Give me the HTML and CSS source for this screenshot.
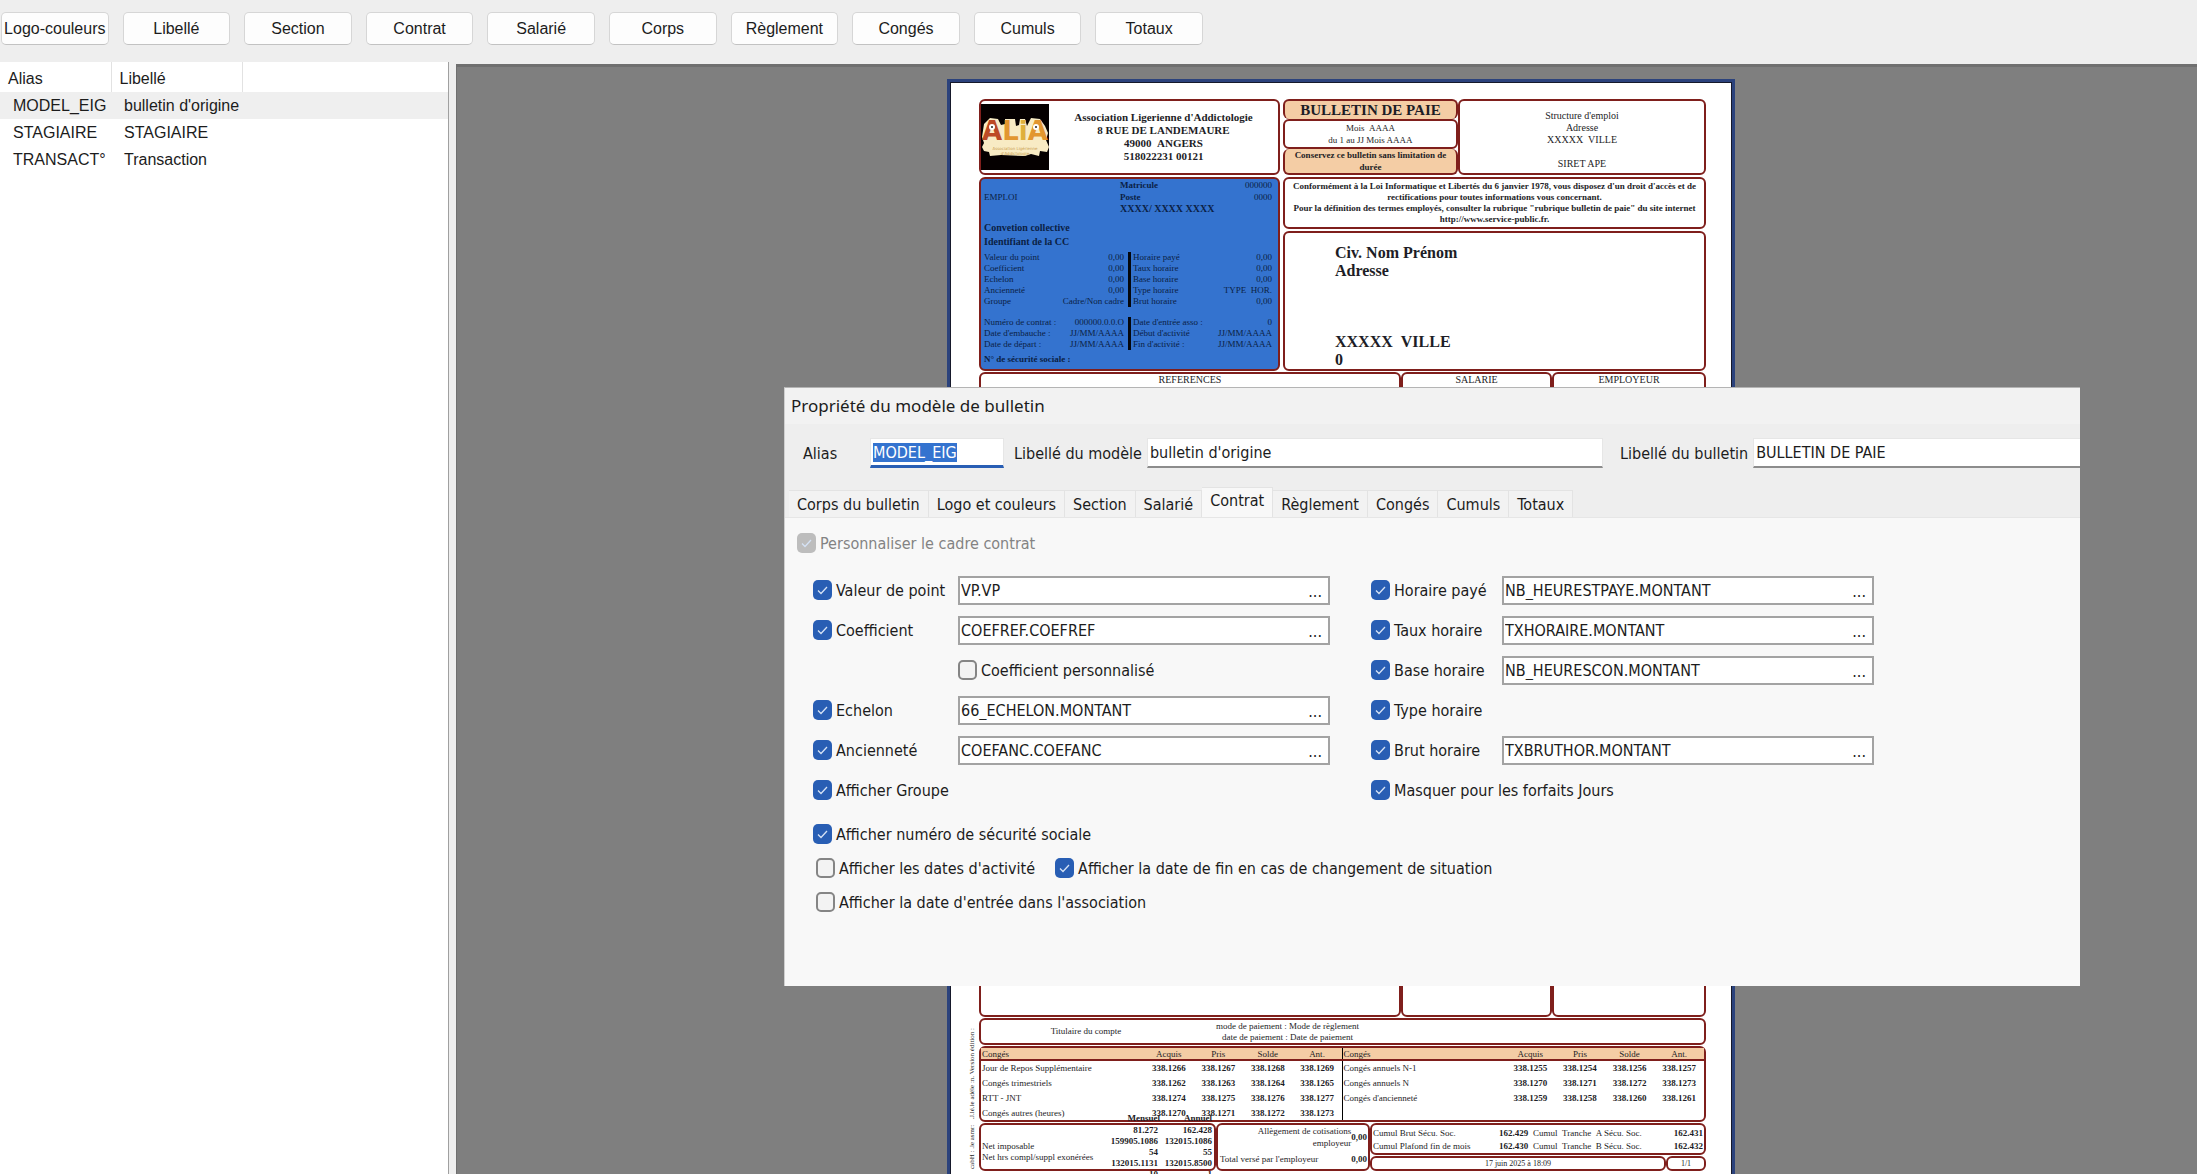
FILE: index.html
```
<!DOCTYPE html>
<html lang="fr">
<head>
  <meta charset="UTF-8" />
  <title>Modèles de bulletin</title>
  <link rel="stylesheet" href="styles.css">
</head>
<body>
  <nav class="toolbar">
    <button type="button">Logo-couleurs</button>
    <button type="button">Libellé</button>
    <button type="button">Section</button>
    <button type="button">Contrat</button>
    <button type="button">Salarié</button>
    <button type="button">Corps</button>
    <button type="button">Règlement</button>
    <button type="button">Congés</button>
    <button type="button">Cumuls</button>
    <button type="button">Totaux</button>
  </nav>

  <div class="workspace">
    <aside class="models">
      <table>
        <thead>
          <tr><th class="col-alias">Alias</th><th class="col-label">Libellé</th><th></th></tr>
        </thead>
        <tbody>
          <tr class="selected"><td>MODEL_EIG</td><td>bulletin d'origine</td><td></td></tr>
          <tr><td>STAGIAIRE</td><td>STAGIAIRE</td><td></td></tr>
          <tr><td>TRANSACT°</td><td>Transaction</td><td></td></tr>
        </tbody>
      </table>
    </aside>

    <main class="preview">
      <div class="paper">
        <div class="side-note">cabH : .le asmr: &nbsp; .J.lé.le adéle :n. Version édition :</div>

        <div class="slip">
          <div class="slip-top">
            <div class="left-col">
              <section class="box company">
                <svg class="logo" viewBox="0 0 68 66" role="img" aria-label="ALiA">
                  <rect width="68" height="66" fill="#050000" />
                  <path d="M1 33 L3 20 L5 18 L9 14 L17 15 L20 21 L24 20 L24 15 L34 15 L35 22 L38 21 L39 15 L44 15 L46 22 L50 14 L59 15 L64 22 L67 29 L65 36 L68 43 L66 48 L59 47 L58 52 L50 50 L44 52 L20 51 L9 52 L8 48 L3 47 L1 43 L3 39 Z" fill="#f8ebc4" />
                  <text x="1" y="36" font-size="26" class="logo-letters"><tspan fill="#bd4a25">A</tspan><tspan fill="#e2962f">L</tspan><tspan fill="#dfb03b">i</tspan><tspan fill="#e2962f">A</tspan></text>
                  <circle cx="11" cy="23" r="3" fill="#fff" />
                  <circle cx="11" cy="23" r="1" fill="#222" />
                  <circle cx="55" cy="23" r="3" fill="#fff" />
                  <circle cx="55" cy="23" r="1" fill="#222" />
                  <text x="34" y="46" font-size="4" class="logo-sub">Association Ligérienne</text>
                  <text x="34" y="51" font-size="4" class="logo-sub">d'Addictologie</text>
                </svg>
                <p>Association Ligerienne d'Addictologie<br>8 RUE DE LANDEMAURE<br>49000 &nbsp;ANGERS<br>518022231 00121</p>
              </section>

              <section class="box contract">
                <div class="contract-head">
                  <span class="job">EMPLOI</span>
                  <b>Matricule</b><span class="num">000000</span>
                  <b>Poste</b><span class="num">0000</span>
                  <b class="xref">XXXX/ XXXX XXXX</b>
                </div>
                <p class="agreement">Convetion collective<br>Identifiant de la CC</p>
                <div class="pairs">
                  <dl>
                    <dt>Valeur du point</dt><dd>0,00</dd>
                    <dt>Coefficient</dt><dd>0,00</dd>
                    <dt>Echelon</dt><dd>0,00</dd>
                    <dt>Ancienneté</dt><dd>0,00</dd>
                    <dt>Groupe</dt><dd>Cadre/Non cadre</dd>
                  </dl>
                  <dl>
                    <dt>Horaire payé</dt><dd>0,00</dd>
                    <dt>Taux horaire</dt><dd>0,00</dd>
                    <dt>Base horaire</dt><dd>0,00</dd>
                    <dt>Type horaire</dt><dd>TYPE &nbsp;HOR.</dd>
                    <dt>Brut horaire</dt><dd>0,00</dd>
                  </dl>
                </div>
                <div class="pairs">
                  <dl>
                    <dt>Numéro de contrat :</dt><dd>000000.0.0.O</dd>
                    <dt>Date d'embauche :</dt><dd>JJ/MM/AAAA</dd>
                    <dt>Date de départ :</dt><dd>JJ/MM/AAAA</dd>
                  </dl>
                  <dl>
                    <dt>Date d'entrée asso :</dt><dd>0</dd>
                    <dt>Début d'activité</dt><dd>JJ/MM/AAAA</dd>
                    <dt>Fin d'activité :</dt><dd>JJ/MM/AAAA</dd>
                  </dl>
                </div>
                <b class="secu">N° de sécurité sociale :</b>
              </section>
            </div>

            <div class="right-col">
              <div class="heads">
                <section class="title-stack">
                  <h1 class="box tinted">BULLETIN DE PAIE</h1>
                  <p class="box period">Mois &nbsp;AAAA<br>du 1 au JJ Mois AAAA</p>
                  <p class="box tinted keep">Conservez ce bulletin sans limitation de<br>durée</p>
                </section>
                <section class="box employer">
                  <p>Structure d'emploi<br>Adresse<br>XXXXX &nbsp;VILLE<br><br>SIRET APE</p>
                </section>
              </div>
              <p class="box legal">Conformément à la Loi Informatique et Libertés du 6 janvier 1978, vous disposez d'un droit d'accès et de<br>rectifications pour toutes informations vous concernant.<br>Pour la définition des termes employés, consulter la rubrique "rubrique bulletin de paie" du site internet<br>http://www.service-public.fr.</p>
              <section class="box address">
                <p>Civ. Nom Prénom<br>Adresse</p>
                <p>XXXXX &nbsp;VILLE<br>0</p>
              </section>
            </div>
          </div>

          <div class="body-cols">
            <div class="box">REFERENCES</div>
            <div class="box">SALARIE</div>
            <div class="box">EMPLOYEUR</div>
          </div>

          <div class="box payment">
            <span>Titulaire du compte</span>
            <p>mode de paiement : Mode de règlement<br>date de paiement : Date de paiement</p>
          </div>

          <div class="box leave">
            <table>
              <thead>
                <tr><th>Congés</th><th>Acquis</th><th>Pris</th><th>Solde</th><th>Ant.</th></tr>
              </thead>
              <tbody>
                <tr><th>Jour de Repos Supplémentaire</th><td>338.1266</td><td>338.1267</td><td>338.1268</td><td>338.1269</td></tr>
                <tr><th>Congés trimestriels</th><td>338.1262</td><td>338.1263</td><td>338.1264</td><td>338.1265</td></tr>
                <tr><th>RTT - JNT</th><td>338.1274</td><td>338.1275</td><td>338.1276</td><td>338.1277</td></tr>
                <tr><th>Congés autres (heures)</th><td>338.1270</td><td>338.1271</td><td>338.1272</td><td>338.1273</td></tr>
              </tbody>
            </table>
            <table>
              <thead>
                <tr><th>Congés</th><th>Acquis</th><th>Pris</th><th>Solde</th><th>Ant.</th></tr>
              </thead>
              <tbody>
                <tr><th>Congés annuels N-1</th><td>338.1255</td><td>338.1254</td><td>338.1256</td><td>338.1257</td></tr>
                <tr><th>Congés annuels N</th><td>338.1270</td><td>338.1271</td><td>338.1272</td><td>338.1273</td></tr>
                <tr><th>Congés d'ancienneté</th><td>338.1259</td><td>338.1258</td><td>338.1260</td><td>338.1261</td></tr>
              </tbody>
            </table>
          </div>

          <div class="totals">
            <div class="box net">
              <div class="net-head"><b>Mensuel</b><b>Annuel</b></div>
              <p class="net-labels">Net imposable<br>Net hrs compl/suppl exonérées</p>
              <b>81.272<br>159905.1086<br>54<br>132015.1131<br>10</b>
              <b>162.428<br>132015.1086<br>55<br>132015.8500<br>1</b>
            </div>
            <div class="box relief">
              <span>Allègement de cotisations<br>employeur</span><b>0,00</b>
              <span class="paid">Total versé par l'employeur</span><b>0,00</b>
            </div>
            <div class="cumuls">
              <div class="box cumul-grid">
                <span>Cumul Brut Sécu. Soc.</span><b>162.429</b><span>Cumul &nbsp;Tranche &nbsp;A Sécu. Soc.</span><b>162.431</b>
                <span>Cumul Plafond fin de mois</span><b>162.430</b><span>Cumul &nbsp;Tranche &nbsp;B Sécu. Soc.</span><b>162.432</b>
              </div>
              <div class="foot">
                <div class="box">17 juin 2025 à 18:09</div>
                <div class="box">1/1</div>
              </div>
            </div>
          </div>
        </div>
      </div>
    </main>
  </div>

  <form class="dialog" role="dialog" aria-labelledby="dialogTitle">
    <h2 id="dialogTitle">Propriété du modèle de bulletin</h2>
    <div class="identity">
      <label for="alias">Alias</label>
      <input type="text" id="alias" class="alias" value="MODEL_EIG" />
      <label for="modelLabel">Libellé du modèle</label>
      <input type="text" id="modelLabel" class="model-label" value="bulletin d'origine" />
      <label for="slipLabel">Libellé du bulletin</label>
      <input type="text" id="slipLabel" class="slip-label" value="BULLETIN DE PAIE" />
    </div>

    <div class="tabs" role="tablist">
      <button type="button" role="tab">Corps du bulletin</button>
      <button type="button" role="tab">Logo et couleurs</button>
      <button type="button" role="tab">Section</button>
      <button type="button" role="tab">Salarié</button>
      <button type="button" role="tab" class="active" aria-selected="true">Contrat</button>
      <button type="button" role="tab">Règlement</button>
      <button type="button" role="tab">Congés</button>
      <button type="button" role="tab">Cumuls</button>
      <button type="button" role="tab">Totaux</button>
    </div>

    <div class="panel">
      <label class="check disabled"><input type="checkbox" checked disabled />Personnaliser le cadre contrat</label>

      <div class="fields">
        <div class="field-col">
          <label class="check"><input type="checkbox" checked />Valeur de point</label>
          <div class="picker"><input type="text" aria-label="Valeur de point" value="VP.VP" /><button type="button">...</button></div>
          <label class="check"><input type="checkbox" checked />Coefficient</label>
          <div class="picker"><input type="text" aria-label="Coefficient" value="COEFREF.COEFREF" /><button type="button">...</button></div>
          <label class="check second"><input type="checkbox" />Coefficient personnalisé</label>
          <label class="check"><input type="checkbox" checked />Echelon</label>
          <div class="picker"><input type="text" aria-label="Echelon" value="66_ECHELON.MONTANT" /><button type="button">...</button></div>
          <label class="check"><input type="checkbox" checked />Ancienneté</label>
          <div class="picker"><input type="text" aria-label="Ancienneté" value="COEFANC.COEFANC" /><button type="button">...</button></div>
          <label class="check wide"><input type="checkbox" checked />Afficher Groupe</label>
        </div>
        <div class="field-col">
          <label class="check"><input type="checkbox" checked />Horaire payé</label>
          <div class="picker"><input type="text" aria-label="Horaire payé" value="NB_HEURESTPAYE.MONTANT" /><button type="button">...</button></div>
          <label class="check"><input type="checkbox" checked />Taux horaire</label>
          <div class="picker"><input type="text" aria-label="Taux horaire" value="TXHORAIRE.MONTANT" /><button type="button">...</button></div>
          <label class="check"><input type="checkbox" checked />Base horaire</label>
          <div class="picker"><input type="text" aria-label="Base horaire" value="NB_HEURESCON.MONTANT" /><button type="button">...</button></div>
          <label class="check wide"><input type="checkbox" checked />Type horaire</label>
          <label class="check"><input type="checkbox" checked />Brut horaire</label>
          <div class="picker"><input type="text" aria-label="Brut horaire" value="TXBRUTHOR.MONTANT" /><button type="button">...</button></div>
          <label class="check wide"><input type="checkbox" checked />Masquer pour les forfaits Jours</label>
        </div>
      </div>

      <div class="options">
        <label class="check"><input type="checkbox" checked />Afficher numéro de sécurité sociale</label>
        <div class="option-row">
          <label class="check"><input type="checkbox" />Afficher les dates d'activité</label>
          <label class="check"><input type="checkbox" checked />Afficher la date de fin en cas de changement de situation</label>
        </div>
        <div class="option-row">
          <label class="check"><input type="checkbox" />Afficher la date d'entrée dans l'association</label>
        </div>
      </div>
    </div>
  </form>

  <script>
    const alias = document.getElementById('alias');
    alias.focus();
    alias.select();
  </script>
</body>
</html>
```

FILE: styles.css
```
:root {
  --ui-font: "DejaVu Sans Condensed", Tahoma, "Noto Sans", sans-serif;
  --list-font: "Liberation Sans", Arial, sans-serif;
  --paper-font: "Liberation Serif", "Times New Roman", serif;
  --chrome: #eeeeee;
  --panel: #f8f8f8;
  --blue: #285eb4;
  --selection: #3473cf;
  --frame: #7f1f1c;
  --tint: #f4cda5;
}

* {
  box-sizing: border-box;
}

body {
  margin: 0;
  height: 100vh;
  display: flex;
  flex-direction: column;
  overflow: hidden;
  background-color: var(--chrome);
  color: #1c1c1c;
  font-family: var(--list-font);
  font-size: 16px;
}

p, h1, h2, dl, dd {
  margin: 0;
}

button, input {
  font: inherit;
  color: inherit;
}

.toolbar {
  display: flex;
  gap: 14px;
  max-width: 1203px;
  padding: 12px 0 17px 1px;
}

.toolbar button {
  flex: 1 1 0;
  height: 33px;
  padding: 0;
  background-color: #fdfdfd;
  border: 1px solid #d6d6d6;
  border-bottom-color: #c2c2c2;
  border-radius: 5px;
  white-space: nowrap;
}

.workspace {
  flex: 1;
  min-height: 0;
  display: flex;
  gap: 7px;
}

/* model list */
.models {
  width: 449px;
  background-color: #fff;
  border-right: 1px solid #a0a0a0;
}

.models table {
  width: 100%;
  border-collapse: collapse;
  table-layout: fixed;
}

.models tr {
  height: 27px;
}

.models thead tr {
  height: 30px;
}

.models th {
  padding: 3px 0 0 8px;
  font-weight: normal;
  text-align: left;
  border-right: 1px solid #e2e2e2;
}

.models th:last-child {
  border-right: none;
}

.models td {
  padding: 0 0 0 13px;
  white-space: nowrap;
}

.col-alias {
  width: 111px;
}

.col-label {
  width: 131px;
}

.selected {
  background-color: #efefef;
}

/* preview */
.preview {
  flex: 1;
  display: flex;
  margin-top: 2px;
  padding: 12px 0 0 490px;
  background-color: #7f7f7f;
  border-top: 3px solid #6f6f6f;
  border-left: 1px solid #6f6f6f;
}

.paper {
  width: 788px;
  height: 1120px;
  flex: none;
  display: flex;
  padding: 17px 26px 0 15px;
  background-color: #fff;
  border: 3px solid #2b427c;
  outline: 1px solid #16192b;
  outline-offset: -4px;
  color: #1d1d26;
  font-family: var(--paper-font);
  font-size: 9px;
  line-height: 11px;
  white-space: nowrap;
}

.side-note {
  width: 14px;
  padding-top: 27px;
  writing-mode: vertical-rl;
  transform: rotate(180deg);
  font-size: 7px;
  line-height: 14px;
}

.slip {
  flex: 1;
  min-width: 0;
  display: flex;
  flex-direction: column;
  gap: 1px;
}

.box {
  border: 2px solid var(--frame);
  border-radius: 6px;
}

.slip-top {
  display: grid;
  grid-template-columns: 301px 1fr;
  gap: 3px;
}

.left-col, .right-col {
  display: flex;
  flex-direction: column;
  gap: 2px;
}

.company {
  height: 76px;
  display: flex;
  align-items: center;
}

.company .logo {
  width: 68px;
  height: 66px;
}

.logo-letters {
  font-family: "DejaVu Sans", sans-serif;
  font-weight: bold;
}

.logo-sub {
  fill: #c99c4e;
  font-family: "DejaVu Sans", sans-serif;
  text-anchor: middle;
}

.company p {
  flex: 1;
  font-size: 11px;
  font-weight: bold;
  line-height: 13px;
  text-align: center;
}

.contract {
  height: 194px;
  padding: 0 6px 0 3px;
  background-color: var(--selection);
  color: #0b1f45;
}

.contract-head {
  display: grid;
  grid-template-columns: 136px 1fr auto;
  line-height: 12px;
}

.contract-head .job {
  grid-row: span 3;
  align-self: center;
}

.contract-head .num {
  text-align: right;
}

.contract-head .xref {
  grid-column: span 2;
  font-size: 10px;
}

.agreement {
  padding: 6px 0 3px;
  font-size: 10px;
  font-weight: bold;
  line-height: 14px;
}

.pairs {
  display: grid;
  grid-template-columns: 1fr 1fr;
}

.pairs + .pairs {
  margin-top: 10px;
}

.pairs dl {
  display: grid;
  grid-template-columns: auto 1fr;
  padding-right: 4px;
}

.pairs dl + dl {
  padding: 0 0 0 2px;
  border-left: 3px solid #05070c;
}

.pairs dd {
  text-align: right;
}

.secu {
  display: block;
  padding-top: 4px;
}

.heads {
  height: 76px;
  display: grid;
  grid-template-columns: 175px 1fr;
}

.title-stack {
  display: flex;
  flex-direction: column;
  text-align: center;
}

.tinted {
  background-color: var(--tint);
}

.title-stack h1 {
  font-size: 15px;
  line-height: 18px;
  border-bottom: none;
}

.title-stack .period {
  padding: 1px 0;
  line-height: 12px;
  background-color: #fff;
}

.title-stack .keep {
  flex: 1;
  font-weight: bold;
  line-height: 12px;
  border-top: none;
}

.employer {
  padding-top: 9px;
  font-size: 10px;
  line-height: 12px;
  text-align: center;
}

.legal {
  height: 52px;
  padding-top: 2px;
  font-weight: bold;
  text-align: center;
}

.address {
  flex: 1;
  display: flex;
  flex-direction: column;
  justify-content: space-between;
  padding: 11px 0 0 50px;
  font-size: 16px;
  font-weight: bold;
  line-height: 18px;
}

.body-cols {
  height: 645px;
  display: grid;
  grid-template-columns: 422px 151px 1fr;
  font-size: 10px;
  text-align: center;
}

.payment {
  height: 27px;
  display: grid;
  grid-template-columns: 210px 1fr;
  align-items: center;
  text-align: center;
}

.payment p {
  padding-right: 320px;
}

.leave {
  height: 76px;
  display: grid;
  grid-template-columns: 1fr 1fr;
  align-items: start;
}

.leave table {
  width: 100%;
  border-collapse: collapse;
  table-layout: fixed;
}

.leave table:first-child {
  border-right: 1px solid #000;
}

.leave thead {
  background-color: var(--tint);
  border-bottom: 2px solid var(--frame);
}

.leave th, .leave td {
  height: 15px;
  padding: 0;
  line-height: 10px;
  text-align: center;
}

.leave thead th {
  height: 12px;
}

.leave th {
  font-weight: normal;
}

.leave td {
  font-weight: bold;
}

.leave th:first-child {
  width: 163px;
  padding-left: 1px;
  text-align: left;
}

.totals {
  display: grid;
  grid-template-columns: 237px 154px 1fr;
  grid-template-rows: 48px;
}

/* column titles sit across the frame of the block above */
.net {
  position: relative;
  display: grid;
  grid-template-columns: 1fr 50px 54px;
  text-align: right;
  line-height: 11px;
}

.net > b {
  padding-right: 2px;
}

.net-head {
  position: absolute;
  top: -12px;
  right: 2px;
  display: flex;
  gap: 24px;
}

.net-labels {
  padding: 16px 0 0 1px;
  text-align: left;
}

.relief {
  display: grid;
  grid-template-columns: 1fr auto;
  grid-template-rows: 24px 1fr;
  align-items: center;
  padding: 0 1px 0 2px;
  text-align: right;
  line-height: 12px;
}

.relief .paid {
  text-align: left;
}

.cumuls {
  display: flex;
  flex-direction: column;
  gap: 1px;
}

.cumul-grid {
  height: 32px;
  display: grid;
  grid-template-columns: 126px 34px 1fr auto;
  padding: 2px 1px 0;
  line-height: 12px;
}

.foot {
  flex: 1;
  display: grid;
  grid-template-columns: 1fr 40px;
  font-size: 8px;
  text-align: center;
}

/* property dialog, floating over the preview */
.dialog {
  position: absolute;
  top: 387px;
  left: 784px;
  right: 117px;
  overflow: hidden;
  background-color: var(--chrome);
  border-top: 1px solid #b4b4b4;
  border-left: 1px solid #cfcfcf;
  font-family: var(--ui-font);
  white-space: nowrap;
}

.dialog h2 {
  padding-left: 6px;
  background-color: #f2f2f2;
  font-family: "Noto Sans", "Open Sans", sans-serif;
  font-size: 17px;
  font-weight: normal;
  line-height: 36px;
}

.identity {
  display: flex;
  align-items: center;
  padding: 14px 0 19px 18px;
}

.identity input {
  height: 30px;
  padding: 0 2px;
  background-color: #fff;
  border: 1px solid #e6e6e6;
  border-bottom: 2px solid #8c8c8c;
  outline: none;
}

.identity label {
  margin-right: 5px;
}

.identity label:first-child {
  width: 62px;
}

.identity .alias {
  width: 134px;
  margin-right: 10px;
  border-bottom: 3px solid var(--blue);
}

.identity .model-label {
  width: 456px;
  margin-right: 17px;
}

.identity .slip-label {
  flex: 1;
  border-right: none;
}

.alias::selection {
  background-color: var(--selection);
  color: #fff;
}

.tabs {
  display: flex;
  align-items: flex-end;
  padding-left: 4px;
}

.tabs button {
  height: 27px;
  padding: 0 8px;
  background-color: #f2f2f2;
  border: 1px solid #e3e3e3;
  border-left: none;
  border-bottom: none;
}

.tabs .active {
  height: 30px;
  padding-bottom: 4px;
  background-color: var(--panel);
}

.panel {
  padding: 15px 0 67px 12px;
  background-color: var(--panel);
  border-top: 1px solid #e6e6e6;
}

.check {
  display: flex;
  align-items: center;
  gap: 4px;
}

.check input {
  appearance: none;
  width: 19px;
  height: 20px;
  flex: none;
  margin: 0;
  background-color: #f3f3f3;
  border: 2px solid #858585;
  border-radius: 5px;
}

.check input:checked {
  border: none;
  background: var(--blue) url("data:image/svg+xml,%3Csvg xmlns='http://www.w3.org/2000/svg' viewBox='0 0 19 20'%3E%3Cpath d='M5 10.5l3 3 6-6.5' fill='none' stroke='%23d5e2f5' stroke-width='1.3'/%3E%3C/svg%3E");
}

.check input:disabled {
  background-color: #bdbdbd;
}

.disabled {
  color: #838383;
}

.fields {
  display: flex;
  gap: 41px;
  padding: 17px 0 0 16px;
}

.field-col {
  display: grid;
  grid-template-columns: 145px 372px;
  grid-auto-rows: 40px;
  align-items: center;
}

.field-col + .field-col {
  grid-template-columns: 131px 372px;
}

.field-col .second {
  grid-column: 2;
}

.field-col .wide {
  grid-column: span 2;
}

.picker {
  height: 29px;
  display: flex;
  background-color: #fff;
  border: 2px solid #a3a3a3;
}

.picker input {
  flex: 1;
  min-width: 0;
  padding: 0 1px;
  background: none;
  border: none;
  outline: none;
}

.picker button {
  padding: 2px 6px 0;
  background: none;
  border: none;
}

.options {
  display: grid;
  grid-auto-rows: 34px;
  align-items: center;
  padding: 7px 0 0 16px;
}

.option-row {
  display: flex;
  gap: 20px;
  padding-left: 3px;
}
```
